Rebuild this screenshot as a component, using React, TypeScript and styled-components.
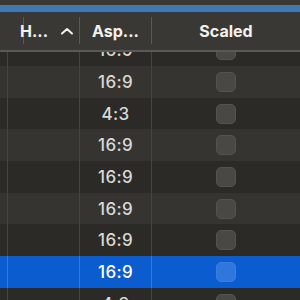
import React from "react";
import styled, { createGlobalStyle } from "styled-components";

const Global = createGlobalStyle`
  html, body { margin: 0; padding: 0; background: #2c2a26; overflow: hidden; }
  * { box-sizing: border-box; }
`;

const Window = styled.div`
  width: 300px;
  height: 300px;
  overflow: hidden;
  display: flex;
  flex-direction: column;
  background: #2c2a26;
  font-family: Inter, "Liberation Sans", sans-serif;
`;

const TopStrip = styled.div`
  height: 5px;
  background: #3a3834;
  flex: none;
`;

const BlueBar = styled.div`
  height: 7px;
  background: #3e79b3;
  flex: none;
`;

const Header = styled.div`
  height: 40px;
  flex: none;
  display: grid;
  grid-template-columns: 8px 72px 72px 1fr;
  background: #3a3834;
  border-bottom: 2px solid #5b5955;
`;

const HeaderCell = styled.div<{ $sep?: boolean; $align?: string }>`
  position: relative;
  display: flex;
  align-items: center;
  justify-content: ${(p) => p.$align || "flex-start"};
  padding: 0 12px;
  color: #f2f1ef;
  font-size: 16px;
  font-weight: 700;
  white-space: nowrap;
  &::after {
    content: "";
    display: ${(p) => (p.$sep ? "block" : "none")};
    position: absolute;
    right: 0;
    top: 5px;
    bottom: 6px;
    width: 1px;
    background: #5b5955;
  }
`;

const Chevron = styled.svg`
  margin-left: auto;
  margin-right: -6px;
  width: 14px;
  height: 8px;
`;

const Body = styled.div`
  flex: 1;
  overflow: hidden;
  display: flex;
  flex-direction: column;
`;

const Row = styled.div<{ $alt?: boolean; $sel?: boolean; $first?: boolean }>`
  height: 31.7px;
  flex: none;
  display: grid;
  grid-template-columns: 8px 72px 72px 1fr;
  margin-top: ${(p) => (p.$first ? "-17.7px" : "0")};
  background: ${(p) => (p.$sel ? "#0a5ccf" : p.$alt ? "#363430" : "#2c2a26")};
  color: ${(p) => (p.$sel ? "#ffffff" : "#dad8d4")};
`;

const Cell = styled.div<{ $sep?: boolean; $sel?: boolean }>`
  display: flex;
  align-items: center;
  justify-content: center;
  font-size: 17px;
  font-weight: 500;
  letter-spacing: 0.3px;
  border-right: ${(p) =>
    p.$sep ? `1px solid ${p.$sel ? "rgba(255,255,255,0.18)" : "#46443f"}` : "none"};
`;

const Check = styled.div<{ $sel?: boolean }>`
  width: 20px;
  height: 20px;
  border-radius: 5px;
  background: ${(p) => (p.$sel ? "#2f77dc" : "#4a4844")};
  border: 1px solid ${(p) => (p.$sel ? "#3a80e0" : "#55534f")};
`;

const rows = ["16:9", "16:9", "4:3", "16:9", "16:9", "16:9", "16:9", "16:9", "4:3"];

export default function App() {
  return (
    <>
      <Global />
      <Window>
        <TopStrip />
        <BlueBar />
        <Header>
          <HeaderCell $sep />
          <HeaderCell $sep>
            H...
            <Chevron viewBox="0 0 14 8">
              <path d="M2 6.5 L7 2 L12 6.5" fill="none" stroke="#f2f1ef" strokeWidth="2" strokeLinecap="round" strokeLinejoin="round" />
            </Chevron>
          </HeaderCell>
          <HeaderCell $sep>Asp...</HeaderCell>
          <HeaderCell $align="center">Scaled</HeaderCell>
        </Header>
        <Body>
          {rows.map((r, i) => {
            const sel = i === 7;
            return (
              <Row key={i} $first={i === 0} $alt={i % 2 === 1} $sel={sel}>
                <Cell $sep $sel={sel} />
                <Cell $sep $sel={sel} />
                <Cell $sep $sel={sel}>{r}</Cell>
                <Cell>
                  <Check $sel={sel} />
                </Cell>
              </Row>
            );
          })}
        </Body>
      </Window>
    </>
  );
}
